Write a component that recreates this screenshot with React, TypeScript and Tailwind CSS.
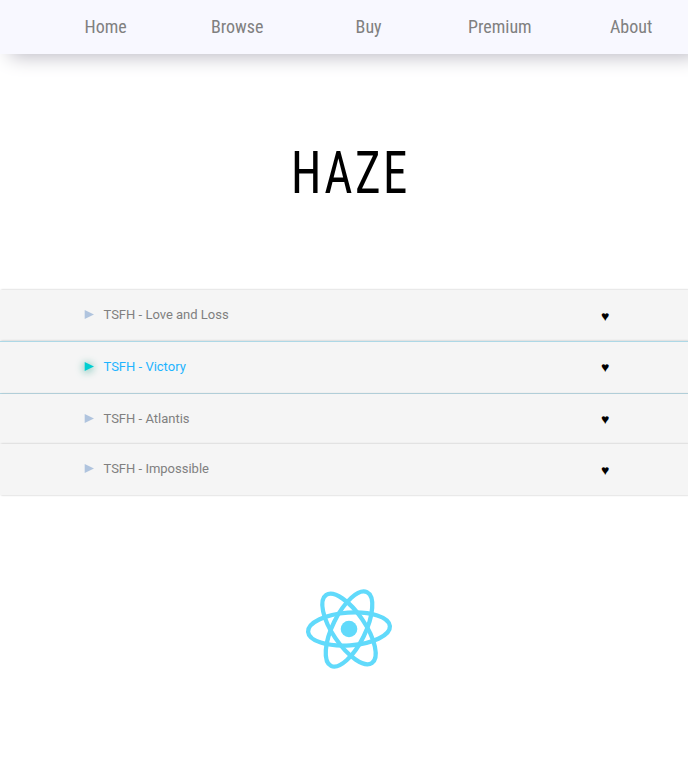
const nav = [
  { label: 'Home', w: 'w-[42px]', ml: 'ml-[84.5px]' },
  { label: 'Browse', w: 'w-[53px]', ml: 'ml-[84.4px]' },
  { label: 'Buy', w: 'w-[27px]', ml: 'ml-[91.7px]' },
  { label: 'Premium', w: 'w-[64px]', ml: 'ml-[85.4px]' },
  { label: 'About', w: 'w-[42px]', ml: 'ml-[78px]' },
];

const tracks = [
  { title: 'TSFH - Love and Loss', row: 'h-[51px] pb-[1px] shadow-[1px_0_2px_#bbb]', arrow: '-mt-px', heart: 'top-[1px]', active: false },
  { title: 'TSFH - Victory', row: 'h-[53px] border-y border-[#add8e6] pb-[1px] shadow-[1px_0_2px_#bbb]', arrow: '-mt-px', heart: 'top-0', active: true },
  { title: 'TSFH - Atlantis', row: 'h-[50px] pb-[1px] shadow-[1px_0_2px_#bbb]', arrow: '', heart: 'top-0', active: false },
  { title: 'TSFH - Impossible', row: 'h-[51px] pb-[1px] shadow-[1px_0_2px_#bbb]', arrow: '-mt-px', heart: 'top-[1px]', active: false },
];

const orbits = [-4, 56, -64];

export default function App() {
  return (
    <div className="flex h-[768px] w-[688px] flex-col overflow-hidden bg-white font-[Roboto,sans-serif]">
      <nav className="flex h-[54px] shrink-0 items-center bg-[#f8f8ff] pb-[2px] text-[18px] text-[#808080] shadow-[10px_2px_20px_#b8b6c0]">
        {nav.map((n) => (
          <a key={n.label} className={`${n.w} ${n.ml} shrink-0 whitespace-nowrap font-[Roboto_Condensed,Roboto,sans-serif]`}>{n.label}</a>
        ))}
      </nav>
      <header className="h-[236px] shrink-0 pt-[89px] pl-[291px]">
        <h1 className="h-[60px] w-[150px] origin-left scale-x-[.83] font-[Roboto_Condensed,Roboto,sans-serif] text-[59px] leading-[60px] font-[370] tracking-[3px] text-black">HAZE</h1>
      </header>
      <main className="shrink-0">
        {tracks.map((t) => (
          <div key={t.title} className={`${t.row} relative flex items-center bg-[#f5f5f5] text-[13px] leading-[20px]`}>
            <svg
              viewBox="0 0 10 9"
              className={`ml-[84px] h-[9px] w-[10px] shrink-0 overflow-visible ${t.arrow} ${t.active ? 'fill-[#00ced1] drop-shadow-[0_1px_4px_#20a08a]' : 'fill-[#b0c4de]'}`}
            >
              <path d="M.7 0 10 4.5 .7 9Z" />
            </svg>
            <span className={`ml-[9.5px] w-[497.5px] ${t.active ? 'text-[#1eb4ff]' : 'text-[#808080]'}`}>{t.title}</span>
            <span className={`relative font-[Liberation_Sans,sans-serif] text-[14px] text-black ${t.heart}`}>♥</span>
          </div>
        ))}
      </main>
      <footer className="flex justify-center pt-[84px] pl-[10px]">
        <svg viewBox="-50 -50 100 100" className="h-[100px] w-[100px] fill-none stroke-[#61dafb] stroke-[4.3]">
          {orbits.map((r) => (
            <path
              key={r}
              transform={`rotate(${r})`}
              d="M-41 0C-41-9-23-16.4 0-16.4S41-9 41 0 23 16.4 0 16.4-41 9-41 0Z"
            />
          ))}
          <circle r="8.3" className="fill-[#61dafb] stroke-none" />
        </svg>
      </footer>
    </div>
  );
}
